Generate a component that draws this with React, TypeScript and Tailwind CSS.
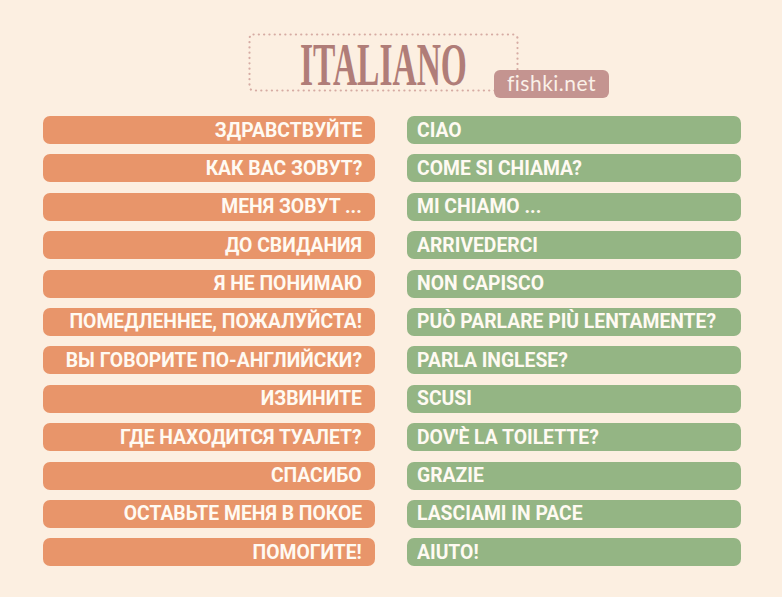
import React from 'react';

const rows: [string, string][] = [
  ['ЗДРАВСТВУЙТЕ', 'CIAO'],
  ['КАК ВАС ЗОВУТ?', 'COME SI CHIAMA?'],
  ['МЕНЯ ЗОВУТ ...', 'MI CHIAMO ...'],
  ['ДО СВИДАНИЯ', 'ARRIVEDERCI'],
  ['Я НЕ ПОНИМАЮ', 'NON CAPISCO'],
  ['ПОМЕДЛЕННЕЕ, ПОЖАЛУЙСТА!', 'PUÒ PARLARE PIÙ LENTAMENTE?'],
  ['ВЫ ГОВОРИТЕ ПО-АНГЛИЙСКИ?', 'PARLA INGLESE?'],
  ['ИЗВИНИТЕ', 'SCUSI'],
  ['ГДЕ НАХОДИТСЯ ТУАЛЕТ?', "DOV'È LA TOILETTE?"],
  ['СПАСИБО', 'GRAZIE'],
  ['ОСТАВЬТЕ МЕНЯ В ПОКОЕ', 'LASCIAMI IN PACE'],
  ['ПОМОГИТЕ!', 'AIUTO!'],
];

const barText = "font-['Roboto',sans-serif] font-bold text-[21px] text-[#fffaf2] leading-none whitespace-nowrap scale-x-[0.92]";

export default function App() {
  return (
    <div className="w-[782px] h-[597px] bg-[#fcefe1] overflow-hidden">
      {/* header */}
      <div className="pt-[33px] pl-[248px]">
        <div className="relative w-[271px] h-[59px]">
          <svg className="absolute inset-0" width="271" height="59">
            <rect
              x="1.5"
              y="1.5"
              width="268"
              height="56"
              rx="4"
              fill="none"
              stroke="#d6aba3"
              strokeWidth="2.2"
              strokeDasharray="0.1 5.2"
              strokeLinecap="round"
            />
          </svg>
          <div className="flex h-full items-center justify-center">
            <span className="font-['Liberation_Serif',serif] font-bold text-[62px] leading-none text-[#b07d78] scale-x-[0.54] mt-[2px]">
              ITALIANO
            </span>
          </div>
          <div className="absolute left-[246px] top-[37px] w-[115px] h-[28px] rounded-[6px] bg-[#c49490] flex items-center justify-center">
            <span className="font-['Lato',sans-serif] text-[21px] leading-none text-[#faf0e8] mt-[-3px] tracking-[0.5px]">fishki.net</span>
          </div>
        </div>
      </div>

      {/* phrase rows */}
      <div className="mt-[24px] pl-[43px] flex flex-col gap-[10.4px]">
        {rows.map(([ru, it]) => (
          <div key={ru} className="flex gap-[32px]">
            <div className="w-[332px] h-[28px] rounded-[7px] bg-[#e8956a] flex items-center justify-end pr-[13px]">
              <span className={`${barText} origin-right`}>{ru}</span>
            </div>
            <div className="w-[334px] h-[28px] rounded-[7px] bg-[#94b584] flex items-center pl-[10px]">
              <span className={`${barText} origin-left`}>{it}</span>
            </div>
          </div>
        ))}
      </div>
    </div>
  );
}
